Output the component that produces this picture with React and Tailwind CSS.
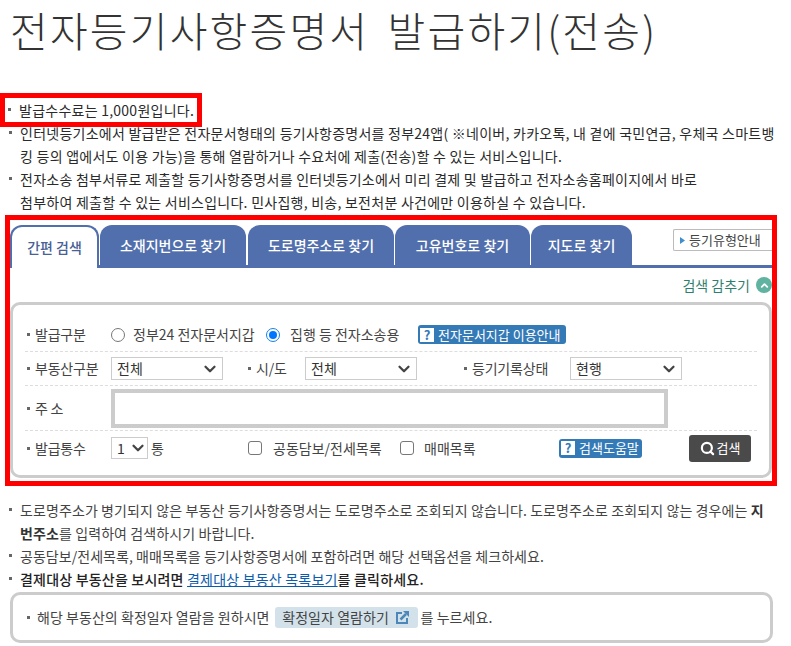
import React from "react";
import { ChevronDown, Search, ChevronUp } from "lucide-react";

const KR = "[font-family:'Noto_Sans_CJK_KR','Noto_Sans',sans-serif]";

const Bullet = ({ children, className = "" }) => (
  <li className={`relative pl-[11px] whitespace-nowrap ${className}`}>
    <span className="absolute left-0 top-[9px] w-[3px] h-[3px] bg-[#666]"></span>
    {children}
  </li>
);

const Label = ({ children, className = "" }) => (
  <span className={`flex items-center gap-[5px] text-[14px] text-[#444] tracking-[-0.2px] ${className}`}>
    <span className="w-[3px] h-[3px] bg-[#666]"></span>
    {children}
  </span>
);

const SelectBox = ({ value, className = "" }) => (
  <div className={`h-[23px] border border-[#ccc] bg-white flex items-center justify-between pl-[5px] pr-[3px] text-[14px] text-[#333] ${className}`}>
    <span>{value}</span>
    <ChevronDown size={18} strokeWidth={3} color="#444" />
  </div>
);

const HelpBadge = ({ children, className = "" }) => (
  <span className={`inline-flex items-center gap-[4px] h-[19px] pl-[2px] rounded-[3px] bg-[#337ab7] text-white text-[13px] whitespace-nowrap ${className}`}>
    <span className="w-[14px] h-[14px] bg-white text-[#337ab7] text-[13px] font-bold flex items-center justify-center">?</span>
    {children}
  </span>
);

const Radio = ({ checked }) => (
  <span className={`w-[14px] h-[14px] shrink-0 rounded-full flex items-center justify-center border ${checked ? "border-[#1a7fe8]" : "border-[#777]"}`}>
    {checked && <span className="w-[8px] h-[8px] rounded-full bg-[#0075ff]"></span>}
  </span>
);

const Check = () => (
  <span className="w-[14px] h-[14px] shrink-0 rounded-[3px] border border-[#777] bg-white"></span>
);

const tabs = [
  { name: "소재지번으로 찾기", w: "w-[146px] ml-[1px]" },
  { name: "도로명주소로 찾기", w: "w-[146px] ml-[2px]" },
  { name: "고유번호로 찾기", w: "w-[135px] ml-[1px]" },
  { name: "지도로 찾기", w: "w-[101px] ml-[1px]" },
];

export default function App() {
  return (
    <div className={`w-[791px] h-[646px] overflow-hidden bg-white text-[#333] ${KR}`}>
      <h1 className="pl-[10px] h-[93px] text-[41px] leading-[58px] font-light text-[#333] tracking-[2.2px] [word-spacing:7px] whitespace-nowrap">
        전자등기사항증명서 발급하기(전송)
      </h1>

      <ul className="text-[14px] leading-[23px] tracking-[0.25px] text-[#2a2a2a]">
        <li className="w-[202px] h-[34px] -mb-[5px] border-[5px] border-[#f00] pl-[3px] pt-[1px]">
          <div className="relative pl-[11px] whitespace-nowrap">
            <span className="absolute left-0 top-[9px] w-[3px] h-[3px] bg-[#666]"></span>
            발급수수료는 1,000원입니다.
          </div>
        </li>
        <Bullet className="ml-[9px]">
          인터넷등기소에서 발급받은 전자문서형태의 등기사항증명서를 정부24앱( ※네이버, 카카오톡, 내 곁에 국민연금, 우체국 스마트뱅
          <br />
          킹 등의 앱에서도 이용 가능)을 통해 열람하거나 수요처에 제출(전송)할 수 있는 서비스입니다.
        </Bullet>
        <Bullet className="ml-[9px]">
          전자소송 첨부서류로 제출할 등기사항증명서를 인터넷등기소에서 미리 결제 및 발급하고 전자소송홈페이지에서 바로
          <br />
          첨부하여 제출할 수 있는 서비스입니다. 민사집행, 비송, 보전처분 사건에만 이용하실 수 있습니다.
        </Bullet>
      </ul>

      <section className="mt-[1px] ml-[5px] w-[772px] h-[271px] border-[5px] border-[#f00] pt-[5px]">
        <div className="relative flex h-[43px] border-b-[3px] border-[#526fad] items-start">
          <div className="w-[89px] h-[43px] border-2 border-b-0 border-[#526fad] rounded-t-[12px] bg-white text-[#4a5f96] text-[14px] font-medium flex items-center justify-center">
            간편 검색
          </div>
          {tabs.map((tab) => (
            <div key={tab.name} className={`${tab.w} h-[40px] rounded-t-[12px] bg-[#526fad] text-white text-[14px] font-medium flex items-center justify-center`}>
              {tab.name}
            </div>
          ))}
          <div className="absolute right-0 top-[4px] w-[99px] h-[22px] border border-[#bbb] border-r-0 rounded-l-[2px] flex items-center pl-[6px] gap-[4px] text-[13px] text-[#444] bg-white">
            <svg width="5" height="7" viewBox="0 0 5 7">
              <path d="M0 0l5 3.5L0 7z" fill="#3f8fd0" />
            </svg>
            등기유형안내
          </div>
        </div>

        <div className="h-[34px] flex items-center justify-end gap-[6px] text-[14px] text-[#2f7f6f]">
          검색 감추기
          <span className="w-[16px] h-[16px] rounded-full bg-[#5fb3a0] flex items-center justify-center">
            <ChevronUp size={11} strokeWidth={4} color="white" />
          </span>
        </div>

        <div className="h-[176px] border-[3px] border-[#ccc] rounded-[10px] bg-white px-[12px] pt-[13px]">
          <div className="h-[34px] flex items-center border-b border-dashed border-[#ddd] pl-[2px]">
            <Label className="w-[84px]">발급구분</Label>
            <span className="w-[155px] flex items-center gap-[8px] text-[14px] text-[#444] whitespace-nowrap">
              <Radio /> 정부24 전자문서지갑
            </span>
            <span className="w-[152px] flex items-center gap-[10px] text-[14px] text-[#444] whitespace-nowrap">
              <Radio checked /> 집행 등 전자소송용
            </span>
            <HelpBadge className="w-[148px]">전자문서지갑 이용안내</HelpBadge>
          </div>

          <div className="h-[34px] flex items-center border-b border-dashed border-[#ddd] pl-[2px]">
            <Label className="w-[84px]">부동산구분</Label>
            <SelectBox value="전체" className="w-[112px]" />
            <Label className="ml-[25px] w-[57px]">시/도</Label>
            <SelectBox value="전체" className="w-[112px]" />
            <Label className="ml-[47px] w-[106px]">등기기록상태</Label>
            <SelectBox value="현행" className="w-[112px]" />
          </div>

          <div className="h-[45px] flex items-center border-b border-dashed border-[#ddd] pl-[2px]">
            <Label className="w-[84px]">주 소</Label>
            <input className="w-[557px] h-[39px] border-[4px] border-[#ccc] bg-white outline-none" />
          </div>

          <div className="h-[34px] flex items-center pl-[2px]">
            <Label className="w-[84px]">발급통수</Label>
            <SelectBox value="1" className="w-[37px] !pr-0 !h-[22px]" />
            <span className="w-[100px] pl-[3px] text-[14px] text-[#444]">통</span>
            <span className="w-[152px] flex items-center gap-[11px] text-[14px] text-[#444] whitespace-nowrap">
              <Check /> 공동담보/전세목록
            </span>
            <span className="w-[159px] flex items-center gap-[10px] text-[14px] text-[#444] whitespace-nowrap">
              <Check /> 매매목록
            </span>
            <HelpBadge className="w-[83px]">검색도움말</HelpBadge>
            <span className="ml-[47px] w-[62px] h-[27px] rounded-[3px] bg-[#4a4a4a] text-white text-[13px] flex items-center justify-center gap-[2px]">
              <Search size={15} strokeWidth={3.5} />
              검색
            </span>
          </div>
        </div>
      </section>

      <ul className="mt-[13px] ml-[9px] text-[14px] leading-[23px] text-[#444]">
        <Bullet className="tracking-[0.1px]">
          도로명주소가 병기되지 않은 부동산 등기사항증명서는 도로명주소로 조회되지 않습니다. 도로명주소로 조회되지 않는 경우에는 <b className="font-bold text-[#333]">지<br />번주소</b>를 입력하여 검색하시기 바랍니다.
        </Bullet>
        <Bullet className="tracking-[0.05px]">공동담보/전세목록, 매매목록을 등기사항증명서에 포함하려면 해당 선택옵션을 체크하세요.</Bullet>
        <Bullet className="font-medium text-[#222] tracking-[0.2px]">
          결제대상 부동산을 보시려면 <a className="text-[#0b5cad] underline font-normal">결제대상 부동산 목록보기</a>를 클릭하세요.
        </Bullet>
      </ul>

      <div className="mt-[1px] ml-[10px] w-[763px] h-[51px] border-[3px] border-[#ccc] rounded-[10px] flex items-center pl-[14px] text-[14px] text-[#444] tracking-[0.05px] whitespace-nowrap">
        <span className="w-[3px] h-[3px] bg-[#666] mr-[7px]"></span>
        해당 부동산의 확정일자 열람을 원하시면
        <span className="ml-[5px] mr-[3px] h-[21px] w-[143px] rounded-[3px] bg-[#d3e2ea] flex items-center justify-center gap-[6px]">
          확정일자 열람하기
          <svg width="15" height="15" viewBox="0 0 15 15" fill="none">
            <path d="M7 3H2v10h10V8" stroke="#4d86b8" strokeWidth="2" />
            <path d="M5.5 9.5L11 4" stroke="#4d86b8" strokeWidth="2.5" />
            <path d="M8 1h6v6z" fill="#4d86b8" />
          </svg>
        </span>
        를 누르세요.
      </div>
    </div>
  );
}
